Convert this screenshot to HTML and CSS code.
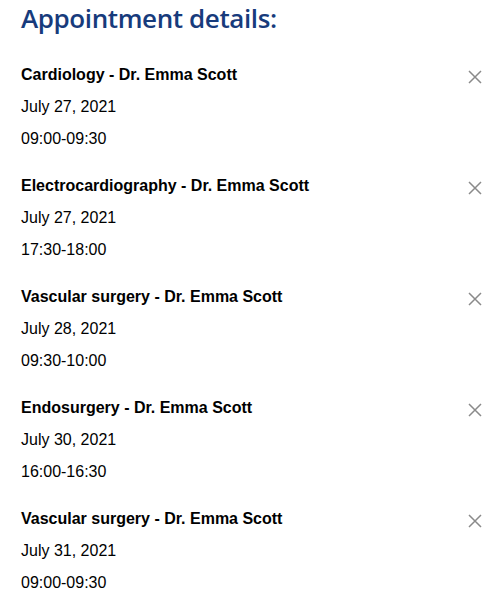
FILE: index.html
```html
<!DOCTYPE html>
<html>
<head>
<meta charset="utf-8">
<link rel="stylesheet" href="styles.css">
</head>
<body>
<div class="page">
  <h1 class="title">Appointment details:</h1>
  <ul class="list">
    <li class="item">
      <div class="info">
        <div class="name">Cardiology - Dr. Emma Scott</div>
        <div class="line">July 27, 2021</div>
        <div class="line">09:00-09:30</div>
      </div>
      <button class="close" aria-label="Remove"><svg viewBox="0 0 14 14" width="14" height="14"><path d="M1 1L13 13M13 1L1 13" stroke="#8a8a8a" stroke-width="1.5" fill="none"/></svg></button>
    </li>
    <li class="item">
      <div class="info">
        <div class="name">Electrocardiography - Dr. Emma Scott</div>
        <div class="line">July 27, 2021</div>
        <div class="line">17:30-18:00</div>
      </div>
      <button class="close" aria-label="Remove"><svg viewBox="0 0 14 14" width="14" height="14"><path d="M1 1L13 13M13 1L1 13" stroke="#8a8a8a" stroke-width="1.5" fill="none"/></svg></button>
    </li>
    <li class="item">
      <div class="info">
        <div class="name">Vascular surgery - Dr. Emma Scott</div>
        <div class="line">July 28, 2021</div>
        <div class="line">09:30-10:00</div>
      </div>
      <button class="close" aria-label="Remove"><svg viewBox="0 0 14 14" width="14" height="14"><path d="M1 1L13 13M13 1L1 13" stroke="#8a8a8a" stroke-width="1.5" fill="none"/></svg></button>
    </li>
    <li class="item">
      <div class="info">
        <div class="name">Endosurgery - Dr. Emma Scott</div>
        <div class="line">July 30, 2021</div>
        <div class="line">16:00-16:30</div>
      </div>
      <button class="close" aria-label="Remove"><svg viewBox="0 0 14 14" width="14" height="14"><path d="M1 1L13 13M13 1L1 13" stroke="#8a8a8a" stroke-width="1.5" fill="none"/></svg></button>
    </li>
    <li class="item">
      <div class="info">
        <div class="name">Vascular surgery - Dr. Emma Scott</div>
        <div class="line">July 31, 2021</div>
        <div class="line">09:00-09:30</div>
      </div>
      <button class="close" aria-label="Remove"><svg viewBox="0 0 14 14" width="14" height="14"><path d="M1 1L13 13M13 1L1 13" stroke="#8a8a8a" stroke-width="1.5" fill="none"/></svg></button>
    </li>
  </ul>
</div>
</body>
</html>
```
FILE: styles.css
```css
html, body {
  margin: 0;
  padding: 0;
  background: #fff;
}
.page {
  padding: 0 12px 0 21px;
  font-family: "Liberation Sans", Arial, sans-serif;
  color: #000;
}
.title {
  margin: 0;
  font-family: "Open Sans", "Noto Sans", sans-serif;
  font-weight: 600;
  font-size: 26px;
  line-height: 36px;
  letter-spacing: -0.4px;
  color: #173b7c;
}
.list {
  list-style: none;
  margin: 23px 0 0;
  padding: 0;
}
.item {
  display: flex;
  justify-content: space-between;
  align-items: flex-start;
  margin-bottom: 15px;
}
.info {
  display: flex;
  flex-direction: column;
}
.name {
  font-weight: 700;
  font-size: 16px;
  line-height: 32px;
}
.line {
  font-size: 16px;
  line-height: 32px;
}
.close {
  border: 0;
  background: none;
  padding: 0;
  margin-top: 11px;
  width: 14px;
  height: 14px;
  display: block;
  cursor: pointer;
}
.close svg {
  display: block;
}
```
